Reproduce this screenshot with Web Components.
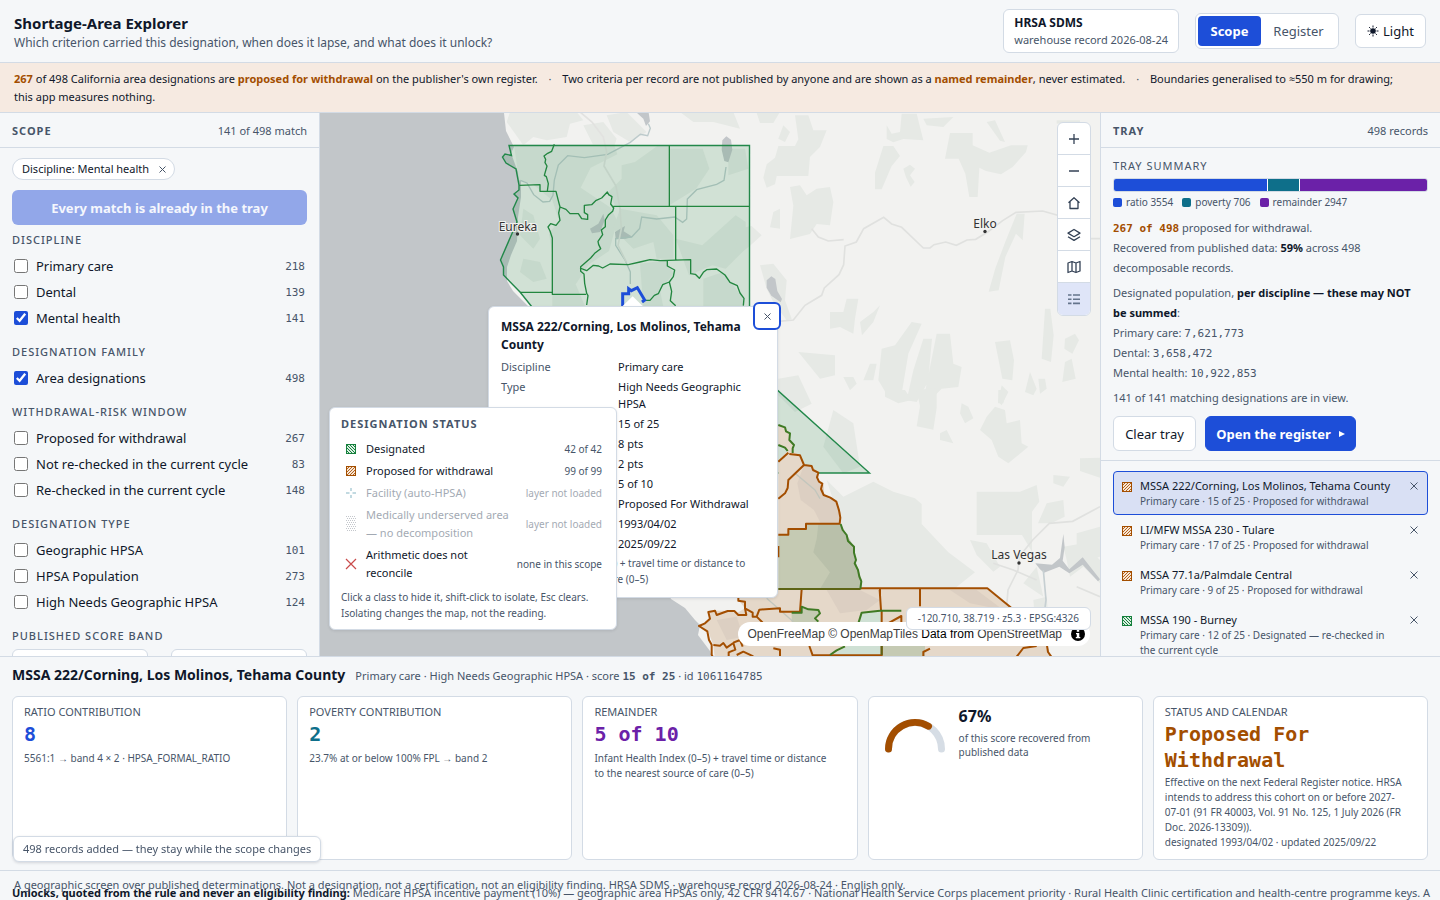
<!DOCTYPE html>
<html lang="en">
<head>
<meta charset="utf-8">
<title>Shortage-Area Explorer</title>
<style>
:root{
  --ink:#0f172a; --muted:#475569; --line:#d3dbe5; --panel:#f5f7f9; --card:#fff;
  --blue:#1d4ed8; --teal:#0e6f8a; --purple:#6b21a8; --rust:#a34e00; --green:#15803d;
  --mono:"DejaVu Sans Mono","Liberation Mono",monospace;
}
html,body{margin:0;height:100%}
body{font:12px/18px "Noto Sans","Open Sans",sans-serif;color:var(--ink);background:var(--panel);overflow:hidden}
</style>
</head>
<body>
<shortage-app></shortage-app>
<script>
const RESET = `*{box-sizing:border-box}button,input{font:inherit;color:inherit;margin:0}button{cursor:pointer}p,h1,h2,h3,dl,dd,ul{margin:0;padding:0}
.num{font-family:var(--mono);font-size:11px;line-height:1}`;
function define(name, css, html, ready) {
  const t = document.createElement('template');
  t.innerHTML = `<style>${RESET}${css}</style>${html}`;
  customElements.define(name, class extends HTMLElement {
    static observedAttributes = ['kind'];
    constructor() {
      super();
      this.attachShadow({mode: 'open'}).append(t.content.cloneNode(true));
    }
    connectedCallback() { if (ready) ready(this, this.shadowRoot); }
    attributeChangedCallback() { if (ready && this.isConnected) ready(this, this.shadowRoot); }
  });
}

define('app-header', `
:host{display:flex;align-items:center;gap:16px;height:63px;padding:0 14px;border-bottom:1px solid var(--line)}
.brand{flex:1;padding-top:3px}
h1{font-size:15px;line-height:20px;font-weight:700}
.brand p{font-size:12px;line-height:20px;color:var(--muted)}
.source{border:1px solid var(--line);border-radius:6px;background:var(--card);padding:4px 10px;height:44px}
.source b{display:block;font-size:12px;line-height:18px}
.source span{display:block;font-size:11px;line-height:16px;color:var(--muted)}
.seg{display:flex;border:1px solid var(--line);border-radius:6px;background:var(--card);padding:2px;height:36px}
.seg button{border:0;background:none;border-radius:4px;padding:0 12px;font-size:13px;color:var(--muted);min-width:63px}
.seg .on{background:var(--blue);color:#fff;font-weight:700}
.seg button+button{min-width:75px}
.theme{display:flex;align-items:center;justify-content:center;gap:4px;border:1px solid var(--line);border-radius:6px;background:var(--card);height:34px;width:71px;padding:0;font-size:13px}
`, `
<div class="brand"><h1>Shortage-Area Explorer</h1><p>Which criterion carried this designation, when does it lapse, and what does it unlock?</p></div>
<div class="source"><b>HRSA SDMS</b><span>warehouse record 2026-08-24</span></div>
<div class="seg"><button class="on">Scope</button><button>Register</button></div>
<button class="theme"><svg width="12" height="12" viewBox="0 0 12 12" stroke="#0f172a" stroke-width="1"><circle cx="6" cy="6" r="2.8" fill="#0f172a" stroke="none"/><path d="M6 .5v2M6 9.500v2M.5 6h2M9.500 6h2M2.100 2.100l1.400 1.400M8.500 8.500l1.400 1.400M9.900 2.100L8.500 3.500M3.500 8.500L2.100 9.900"/></svg>Light</button>`);

define('notice-banner', `
:host{display:block;background:#f6eae1;border-bottom:1px solid var(--line);padding:7px 14px 6px;font-size:11px;line-height:18px}
b{color:var(--rust)} i{font-style:normal;color:var(--muted);margin:0 8px}
`, `<b>267</b> of 498 California area designations are <b>proposed for withdrawal</b> on the publisher's own register. <i>·</i> Two criteria per record are not published by anyone and are shown as a <b>named remainder</b>, never estimated. <i>·</i> Boundaries generalised to ≈550 m for drawing;<br>this app measures nothing.`);

define('panel-head', `
:host{display:flex;justify-content:space-between;align-items:center;flex:none;height:35px;padding:1px 12px 0;border-bottom:1px solid var(--line)}
h2{font-size:11px;line-height:16px;font-weight:700;letter-spacing:1px;color:var(--muted)}
span{font-size:11px;color:var(--muted)}
`, `<h2></h2><span><slot></slot></span>`, (el, r) => r.querySelector('h2').textContent = el.getAttribute('heading'));

define('facet-row', `
:host{display:flex;align-items:center;height:26px;padding:0 2px}
label{display:flex;align-items:center;gap:8px;flex:1;font-size:13px}
input{width:14px;height:14px;accent-color:var(--blue)}
.num{color:var(--muted)}
`, `<label><input type="checkbox"><slot></slot></label><span class="num"></span>`, (el, r) => {
  r.querySelector('.num').textContent = el.getAttribute('count');
  r.querySelector('input').checked = el.hasAttribute('checked');
});

define('facet-group', `
:host{display:block;margin-bottom:13px}
h3{font-size:11px;line-height:18px;font-weight:500;letter-spacing:1px;color:var(--muted);margin-bottom:4px}
`, `<h3></h3><slot></slot>`, (el, r) => r.querySelector('h3').textContent = el.getAttribute('heading'));

define('scope-panel', `
:host{display:flex;flex-direction:column;border-right:1px solid var(--line);overflow:hidden;min-height:0}
.body{padding:10px 12px 0}
.chip{display:inline-flex;align-items:center;gap:10px;height:22px;border:1px solid var(--line);border-radius:11px;background:var(--card);padding:0 8px 0 9px;font-size:11px}
.chip svg{display:block}
.add{display:block;width:100%;height:35px;margin:10px 0 6px;border:0;border-radius:6px;background:#92a7e9;color:#f5f7fd;font-size:13px;font-weight:700}
.band{display:grid;grid-template-columns:136px 136px;justify-content:space-between}
.band input{width:100%;height:32px;border:1px solid var(--line);border-radius:6px;background:var(--card)}
facet-group{margin-bottom:12px}
`, `
<panel-head heading="SCOPE">141 of 498 match</panel-head>
<div class="body">
<button class="chip">Discipline: Mental health <svg width="7" height="7" viewBox="0 0 7 7" stroke="#475569"><path d="M.5.5l6 6M6.500.5l-6 6"/></svg></button>
<button class="add" disabled>Every match is already in the tray</button>
<facet-group heading="DISCIPLINE"><facet-row count="218">Primary care</facet-row><facet-row count="139">Dental</facet-row><facet-row count="141" checked>Mental health</facet-row></facet-group>
<facet-group heading="DESIGNATION FAMILY"><facet-row count="498" checked>Area designations</facet-row></facet-group>
<facet-group heading="WITHDRAWAL-RISK WINDOW"><facet-row count="267">Proposed for withdrawal</facet-row><facet-row count="83">Not re-checked in the current cycle</facet-row><facet-row count="148">Re-checked in the current cycle</facet-row></facet-group>
<facet-group heading="DESIGNATION TYPE"><facet-row count="101">Geographic HPSA</facet-row><facet-row count="273">HPSA Population</facet-row><facet-row count="124">High Needs Geographic HPSA</facet-row></facet-group>
<facet-group heading="PUBLISHED SCORE BAND"><div class="band"><input type="number" aria-label="Lowest score"><input type="number" aria-label="Highest score"></div></facet-group>
</div>`);

const SWATCH = {
  designated: '<rect x=".5" y=".5" width="9" height="9" fill="#dcefe2" stroke="#15803d"/><path d="M1 1l8 8M1 4l5 5M4 1l5 5M1 7l2 2M7 1l2 2" stroke="#15803d"/>',
  proposed: '<rect x=".5" y=".5" width="9" height="9" fill="#f7e6d6" stroke="#a34e00"/><path d="M9 1L1 9M6 1L1 6M9 4L4 9M3 1L1 3M9 7L7 9" stroke="#b4631c"/>',
  facility: '<path d="M5 0v3M5 7v3M0 5h3.500M6.500 5H10" stroke="#0e6f8a"/>',
  mua: '<path d="M0 -2.500h10M0 1.500h10M0 5.500h10M0 9.500h10" stroke="#8a919b" stroke-dasharray="1 1"/><path d="M1 -.5h9M1 3.500h9M1 7.500h9M1 11.500h9" stroke="#8a919b" stroke-dasharray="1 1"/>',
  error: '<path d="M0 0l10 10M10 0L0 10" stroke="#c94b4b" stroke-width="1.200"/>'
};
define('status-swatch', `:host{display:block;width:10px;height:10px;flex:none}svg{display:block;overflow:visible}`,
  `<svg width="10" height="10" viewBox="0 0 10 10"></svg>`, (el, r) => r.querySelector('svg').innerHTML = SWATCH[el.getAttribute('kind')] || '');

define('legend-row', `
:host{display:block}
button{display:flex;align-items:center;gap:4px;width:100%;border:0;background:none;text-align:left;padding:2px 3px 2px 5px;font-size:11px;line-height:18px}
:host([off]) button{opacity:.5;color:#475569}
status-swatch{margin-right:6px}
.name{flex:1;white-space:nowrap} .count{font-size:10px;color:var(--muted);white-space:nowrap}
`, `<button><status-swatch></status-swatch><span class="name"><slot></slot></span><span class="count"></span></button>`, (el, r) => {
  r.querySelector('.count').textContent = el.getAttribute('count');
  r.querySelector('status-swatch').setAttribute('kind', el.getAttribute('kind'));
});

define('map-legend', `
:host{display:block;border:1px solid var(--line);border-radius:6px;background:var(--card);padding:7px 11px 8px;box-shadow:0 1px 3px #0f172a1a}
h2{font-size:11px;line-height:18px;font-weight:700;letter-spacing:1px;color:var(--muted);margin-bottom:5px}
p{font-size:10px;line-height:16px;color:var(--muted);margin-top:5px}
`, `<h2>DESIGNATION STATUS</h2>
<legend-row kind="designated" count="42 of 42">Designated</legend-row>
<legend-row kind="proposed" count="99 of 99">Proposed for withdrawal</legend-row>
<legend-row kind="facility" count="layer not loaded" off>Facility (auto-HPSA)</legend-row>
<legend-row kind="mua" count="layer not loaded" off>Medically underserved area<br>— no decomposition</legend-row>
<legend-row kind="error" count="none in this scope">Arithmetic does not<br>reconcile</legend-row>
<p>Click a class to hide it, shift-click to isolate, Esc clears.<br>Isolating changes the map, not the reading.</p>`);

define('map-popup', `
:host{display:block;background:var(--card);border:1px solid var(--line);border-radius:6px;padding:11px 12px;box-shadow:0 1px 3px #0f172a1a}
h2{font-size:12px;line-height:18px;font-weight:700;margin-bottom:4px}
dl{display:grid;grid-template-columns:112px 1fr;gap:3px 5px;font-size:11px;line-height:17px}
dt{color:var(--muted)}
p{font-size:10px;line-height:16px;color:var(--muted);margin-top:3px}
.close{position:absolute;right:-4px;top:-5px;width:28px;height:28px;border:2px solid var(--blue);border-radius:6px;background:var(--card);padding:0;display:grid;place-items:center}
`, `<h2>MSSA 222/Corning, Los Molinos, Tehama<br>County</h2>
<dl><dt>Discipline</dt><dd>Primary care</dd><dt>Type</dt><dd>High Needs Geographic<br>HPSA</dd><dt>Score</dt><dd>15 of 25</dd><dt>Ratio</dt><dd>8 pts</dd><dt>Poverty</dt><dd>2 pts</dd><dt>Remainder</dt><dd>5 of 10</dd><dt>Status</dt><dd>Proposed For Withdrawal</dd><dt>Designated</dt><dd>1993/04/02</dd><dt>Updated</dt><dd>2025/09/22</dd></dl>
<p>Infant Health Index (0–5) + travel time or distance to<br>the nearest source of care (0–5)</p>
<button class="close" aria-label="Close"><svg width="7" height="7" viewBox="0 0 7 7" stroke="#475569"><path d="M.5.5l6 6M6.500.5l-6 6"/></svg></button>`);

define('map-tools', `
:host{display:block;width:34px;border:1px solid var(--line);border-radius:6px;background:var(--card);overflow:hidden}
button{display:grid;place-items:center;width:32px;height:32px;border:0;border-bottom:1px solid var(--line);background:none;padding:0}
button:last-child{border:0;background:#dfe5f8}
svg{display:block;fill:none;stroke:#334155;stroke-width:1.300}
`, `
<button aria-label="Zoom in"><svg width="14" height="14"><path d="M7 2v10M2 7h10"/></svg></button>
<button aria-label="Zoom out"><svg width="14" height="14"><path d="M2 7h10"/></svg></button>
<button aria-label="Home"><svg width="14" height="14" stroke-linejoin="round"><path d="M1.500 6.800L7 1.800l5.500 5M3 5.800v6.700h8V5.800"/></svg></button>
<button aria-label="Layers"><svg width="14" height="14" stroke-linejoin="round"><path d="M7 1.500l6 3.600-6 3.600-6-3.600zM1 8.800l6 3.600 6-3.600"/></svg></button>
<button aria-label="Base map"><svg width="14" height="14" stroke-linejoin="round"><path d="M1 3l4-1.500 4 1.500 4-1.500v9.500L9 12.500 5 11l-4 1.500zM5 1.500V11M9 3v9.500"/></svg></button>
<button aria-label="Legend"><svg width="14" height="14" style="stroke:#64748b;stroke-width:1.600"><path d="M1 3h3.500M6 3h7M1 7.200h3.500M6 7.200h7M1 11.400h3.500M6 11.400h7"/></svg></button>`);

define('map-view', `
:host{display:block;position:relative;overflow:hidden;min-height:0;background:#c2c6c9}
.map{position:absolute;inset:0;width:100%;height:100%}
.lbl{font:12px "Noto Sans",sans-serif;fill:#333;stroke:#f2f2f0;stroke-width:2;paint-order:stroke;text-anchor:middle}
map-popup{position:absolute;left:168px;top:193px;width:290px;height:292px}
map-legend{position:absolute;left:9px;bottom:26px;width:288px}
map-tools{position:absolute;right:9px;top:9px}
.coord{position:absolute;right:9px;bottom:26px;height:23px;padding:0 11px;border:1px solid var(--line);border-radius:6px;background:var(--card);font-size:10px;line-height:21px;color:var(--muted);white-space:nowrap}
.attr{position:absolute;right:10px;bottom:10px;height:24px;border-radius:12px;background:#fff;padding:0 28px 0 9px;font:12px/24px "Liberation Sans",sans-serif;color:#000;white-space:nowrap}
.attr a{color:#404040;text-decoration:none}
.attr svg{position:absolute;right:5px;top:5px}
`, `
<svg class="map" viewBox="320 113 780 543" preserveAspectRatio="xMidYMid slice" aria-hidden="true">
<path fill="#f2f2f0" d="M504 113l2 18 8 16-3 6 5 14 5 10v20l-3 20-1 24-6 14-4 12v14l6 10 14 14 14 14 30 30 100 250 14 9 10 12 5 5-2 10 12 16 4 14H1100V113z"/>
<g transform="translate(320 112) scale(.333333)">
 <g fill="#e6e9e5">
  <path d="M570 0h200l20 25-40 10-10 40-60 10-40-10-30 25-50-70zM790 40l60-10 40 50-10 30-60-10zM860 10l60-10 60 60-50 30-50-30zM1080 0h160l20 50-80-20-60 0z"/>
  <path d="M582 97h300l10 30-80 40-30 60 90 60 20 40-25 90-60 40-40 60 30 70-100-2v-160l-10-60 30-40-20-60-60-50-40-10z"/>
  <path d="M905 160l40-10 70-50h30v180h-160l-20-40 40-40zM1048 110l100 0 20 60-40 60-80 50zM900 290l110 20 50 60v70l-50 0-10-50-60 20-60-60zM1067 380l80 20 100-90 30 20v80l-60 60-40-10-70 30zM960 455l80-10 20 40-40 50 10 50h-60zM1150 500l60-20 60 80v30h-120zM610 290l30 20 20 70-20 30-40-40zM610 440l50 10 20 50-40 10-40-30z"/>
  <path d="M1225 110h50l10 60-60 20z"/>
 </g>
 <path fill="#c2c6c9" d="M950 2h36l4 26-12 14-8-22zM1207 85l12-12 14 10 4 30-12 38-12-4-8-34zM810 350l25-15 15-30 4 20-14 35-24 4zM885 360l30-18-4 16 26 16-20 6-30 2z"/>
 <g fill="none" stroke="#bccacb" stroke-width="4"><path d="M985 35l6 14-8 22-22-4-30 24-68 36-70 10-50-6-28 28-12 45-4 46-10 18-20 2-28-22-20-35-20-8M1218 165l-6 40-22 12-60 16-28 28-2 60-12 10-24-16-54 6-45-6-6 34-24 26-48 5 0 20 28 44 16 36 0 36"/></g>
 <path fill="none" stroke="#e2e2e0" stroke-width="5" d="M780 0l36 30 34 45 10 45-8 42 36 60 12 68 4 60-10 50 26 52"/>
</g>
<g transform="translate(740 112) scale(.333333)">
 <g fill="#e6e9e5">
  <path d="M50 3h68l-18 30-40 0zM165 10h40l15 45 40 0-20 50-30 30-5 57h-95l-5 25-25 10-10-30 10-40 25-20 10-35h50l10-20zM130 40l20 20-15 30-20-10zM430 102l30 0 20 30-25 30-30 70-20 0 0-50zM440 40l15 25 25-5 5-55h45l20 80-60-4-30 10-20-10zM550 20l90-5-30 30-50-5zM630 63h68v37l50 22 65-22h50l-5 20-40 45-35 22-45-10-20-10-5 88-25 0-12-70-20-45h-41zM740 30l25-5 30 65-15-4zM490 170l20-12 15 12-15 20 14 20-12 14-14-28zM150 225l30-5 20 30 30-20 40-5 10 45-10 70-40-4-20 30-60 15 10-100zM60 460l40-5 40 50-5 60 20 55-15 5-40-55-20-40zM-5 350l40-8 30 28-40 36-40 28zM100 300l20-10 0 60-30-4zM830 305l24 0-6 80-20-20-32 70-20 100-30 4 20-70 30-80zM270 600l40 0 10-40 35 0-10 60-5 45-40-20-30 5zM360 630l40-30 20-20-20 50-34 40zM175 720l110 10v60l-45 10zM425 710l40-10 50-70 30 5-40 90-20 120-40 10-30-50zM500 865l20-90 30-95 26 0-12 130-34 60zM590 665l40 0 10 90 25 10-10 60-50 5-60 60zM765 690l45-5 12 60-5 60-30-5zM915 590l16 0 10 80-8 80-28-10zM975 680l30-15 12 20-20 40-24-15zM975 750l20-10 12 60-40 10zM310 795l30 0 10 20-20 20zM390 755l20 0-10 50-30 0zM870 780l20 50-10 20-25-10zM895 800l20 0 5 30-20 15zM785 820l20 20-20 40-10-10zM115 800l60-10 40 85-50 25-50-50z"/>
  <path d="M950 25h70v10H950z"/>
 </g>
 <path fill="#c2c6c9" d="M80 505l14-12 12 8 6 36 14 24-4 10-28-20-14-24z"/>
 <g fill="none" stroke="#e0e1df" stroke-width="5"><path d="M115 628l45-4 35-44 50-30 8-22 44-40 14-30 4-56 34-12 22-40 60-34 24 20 30 10 65 62h20l12-10 35-8 32 10 32-16 26-2 36-22 45-34 40-25 80-4 50 14 30 30M215 350l20 25 30 12 46-4M1050 380h35"/></g>
</g>
<g transform="translate(860 390) scale(.333333)">
 <g fill="#e6e9e5">
  <path d="M75 0h60l20 30-40 10-40-20zM170 0l60-6 0 60-10 65-50-10 10-60zM415 0l25 0-10 40-16 0zM305 40l20 10 15 35-25 15-15-30zM240 130l20-10 20 40-40-10zM405 50l30 10 5 40 40-10 5 70 20 10-60 50-30-20-20-50-35-30 20-40zM-100 270l50 50 90-45 60 30 65 20 20 17v60l80 85 80 60-60 48H0l-20-70-30-100zM350 305h130l50-20 8 50-22 30 0 120-30-50h-136zM660 205l60-2v60l-60-20zM580 255l50 5-20 30-30-10zM560 340l50-10 4 50-40 20-40 0zM330 450l50 10 40 70-20 15-50-50zM650 430l70-20v90l-70 20zM610 470l60-10 50 50v70l-50-50-40 30-10-50zM530 530l20 90-60-40zM520 630l40-10 5 60-40 10z"/>
  <path d="M-80 60l60 40 20 130-50 20-60-80z"/>
 </g>
 <path fill="#c2c6c9" d="M610 432l4 40-6 40 20 26 40-36 52 66-6 6-46-50-40 26-30-20-46 18-12-10-14-18 50 4 24-20z"/>
 <g fill="none" stroke="#e0e1df" stroke-width="5"><path d="M440 650l4-50 30-60 4-40 40-50 50-50 70-6 82-44M400 520l60 20 70 30M650 590l70 30"/></g>
 <path fill="none" stroke="#c6cfd2" stroke-width="5" d="M550 540l8 90-4 30"/>
</g>
<g fill="#15803d" fill-opacity=".15" stroke="#22884a" stroke-width="1.400">
 <path d="M509 145.500H749.500V365L869.500 473H640L532 307 520 292 503.500 275V267L500.500 260 517 222 513 209 518 198 514 194 519 190V185L516 169 506 163 502.500 157 505 154 511.500 155.500z"/>
</g>
<g transform="translate(320 112) scale(.333333)" fill="none" stroke="#22863f" stroke-width="4" stroke-linejoin="round">
 <path d="M703 97l-8 21-12 6-11 8 5 10-2 10 6 10-8 28 6 4 6 21-3 22M598 220l62-2v20h48l6 24 6 23-4 18 4 22-12 15-16-5-8 10 6 12 7 21v167M720 285l18 7 12 13 25 0 10 15 18 2v-14l-10-6v-22l22-2 12-12 18-8 17-18 4 8 10 6-4 22 9 12-3 10-12 10-10 16 0 20-12 10 4 14-14 20 2 10 6 12-18 14-12 14-30 26 0 14 10 8 2 28 6 30 4 7-4 28M880 283h408M1048 100v183M1067 283v162M780 468l20 8 20-16 16 2 12 6 22-12 55 2 35-8 30-7 30 3 92-3v42l14 2 12 12 12-18 10-8 30-2 25 18 15 22 22 10 8 22 12 16-2 22M1042 445v17l22 12-4 20-12 16 7 28-4 28 16 15M1048 510l-20 8-13 27-12 5-13 15h-15M600 541h97v6h101"/>
 <path stroke="#1d4ed8" stroke-width="9" stroke-linejoin="miter" d="M908 583v-38h18v-15l8 6 18-9 22 37-8 6"/>
 <path stroke="none" fill="#fff" d="M905 585l33-32 33 32z"/>
</g>
<g transform="translate(600 390) scale(.333333)" stroke-linejoin="round">
 <path fill="#e5d8c9" d="M535 105l20 7 15 18-2 20 14 15-2 20 20 10 12 30 23 3 20 20v27l15 10 2 30 38 20 12 35v65H535z"/>
 <path fill="#dccfc2" d="M612 225l23 3 20 20v27l15 10 2 30 38 20 12 35v30h-60l-20-40-40-30-10-50z"/>
 <path fill="#cfe0d4" d="M535 165l20 8 8 10-28 26z"/>
 <path fill="#c5cab3" d="M535 435h30v-17h53v-16h104l18 33 22 35 3 40 20 60-3 27H535z"/>
 <path fill="#b9c0aa" d="M655 402h67l18 33 22 35 3 40 20 60-3 27H660l30-50-50-60 10-40z"/>
 <path fill="#e5d8c9" d="M415 597H1160L1230 650 1345 775 1355 810H345L340 765 325 725 300 708 330 685 325 668 350 662 385 662 410 670 435 655 415 630z"/>
 <path fill="#dccfc2" d="M680 600l100 0 60 30-40 30-80 10zM1050 600l80 0 80 60-100-20zM350 690l60-10 20 60-50 10z"/>
 <path fill="#c5cab3" d="M575 668h30v-18l50 10 5 10-15 15 15 20-85 10z"/>
 <path fill="#cfe0d4" d="M785 668l58-8v140H690l80-50z"/>
 <path fill="#c5cab3" d="M845 740h130v70H845z"/>
 <path fill="none" stroke="#c2c6bd" stroke-width="4" d="M585 250l60 50 15 26M500 625l80 70"/>
 <g fill="none" stroke="#a34e00" stroke-width="6">
  <path d="M568 192l32 4 12 29 23 3 4 12 16 8-4 14 6 13 10 6-4 16 8 18 20 8 18 12 8 26 4 22-2 18H618v16h-53v17h-30M535 215l30-27M612 225l-47 45-2 24-8 16-20 16M535 468v34"/>
  <path d="M782 595h380l68 55 90 90M605 597l-5 68h-60v-10l-62 4-8 21h-12l0-12-23-13v-20l-20-3v-10M470 680l20 20M435 655l4 20-24 0-12-12-20 0-33 12-5-13-20 4 5 20-15 14-18 8 25 16 5 26 8 14 0 30 12 26M340 765l20 2 10-8 10 14 20-14 6 20-20 8 0 20M400 758l20-8 8 20M410 795l20-10 30 14M520 775l20 4v20M628 768l10 28h210M840 597v20M843 660l-4-60M845 660v135M960 597v52M864 700l40-22v24M970 800v-14l20-10M1250 800l20-26 40-6M1340 760l4 26 10 14"/>
 </g>
 <g fill="none" stroke="#3f7a24" stroke-width="6">
  <path d="M535 105l20 7 3 12 12 6-2 20 14 15-4 10 0 14M722 402l6 18 12 15 4 18 18 17 0 18 6 22-4 10 10 20 4 20 6 14-3 23M575 668h30v-18l20 8 30 2 5 10-15 15 10 10M775 700l10-32 55-6h64M690 795l20-14 25-12M535 165l20 8 8 10"/>
  <path stroke="#5d6416" d="M535 597h247M845 710v85"/>
 </g>
</g>
<circle cx="517.500" cy="234" r="1.700" fill="#333"/><circle cx="985" cy="231.500" r="1.700" fill="#333"/><circle cx="1019" cy="563" r="1.700" fill="#333"/>
<text class="lbl" x="518" y="231">Eureka</text><text class="lbl" x="985" y="228">Elko</text><text class="lbl" x="1019" y="559">Las Vegas</text>
</svg>
<map-tools></map-tools>
<div class="attr"><a href="#">OpenFreeMap</a> <a href="#">© OpenMapTiles</a> Data from <a href="#">OpenStreetMap</a><svg width="14" height="14" viewBox="0 0 14 14"><circle cx="7" cy="7" r="7"/><path fill="#fff" d="M5.800 2.500h2.400v2.200H5.800zM5 6h3.300v4H9.300v1.300H4.800V10h1V7.300H5z"/></svg></div>
<div class="coord">-120.710, 38.719 · z5.3 · EPSG:4326</div>
<map-popup></map-popup>
<map-legend></map-legend>`);

define('tray-item', `
:host{display:flex;gap:8px;min-height:45px;padding:5px 8px;border:1px solid transparent;border-radius:4px}
:host([selected]){background:#d9e0f4;border-color:var(--blue);min-height:44px}
status-swatch{margin-top:5px}
.t{flex:1;min-width:0}
h3{font-size:11px;line-height:17px;font-weight:400;white-space:nowrap}
p{font-size:10px;line-height:15px;color:var(--muted);max-width:262px}
button{border:0;background:none;padding:0;width:10px;height:10px;margin-top:4px;display:grid;place-items:center}
`, `<status-swatch></status-swatch><div class="t"><h3></h3><p><slot></slot></p></div><button aria-label="Remove"><svg width="8" height="8" viewBox="0 0 8 8" stroke="#475569"><path d="M.5.5l7 7M7.500.5l-7 7"/></svg></button>`, (el, r) => {
  r.querySelector('h3').textContent = el.getAttribute('name');
  r.querySelector('status-swatch').setAttribute('kind', el.getAttribute('kind'));
});

define('tray-panel', `
:host{display:flex;flex-direction:column;border-left:1px solid var(--line);overflow:hidden;min-height:0}
.body{padding:9px 12px;border-bottom:1px solid var(--line);color:var(--muted);font-size:11px;line-height:20px}
h3{font-size:11px;line-height:18px;font-weight:400;letter-spacing:1px;margin-bottom:3px}
.bar{display:flex;gap:1px;height:14px;border:1px solid var(--line);border-radius:3px;background:#fff;overflow:hidden}
.bar i:nth-child(1){flex:3554;background:var(--blue)}.bar i:nth-child(2){flex:706;background:var(--teal)}.bar i:nth-child(3){flex:2947;background:var(--purple)}
.key{display:flex;gap:9px;font-size:10px;line-height:18px;margin-top:1px}
.key span{display:flex;align-items:center;gap:4px}
.key i{width:9px;height:9px;border-radius:2px}
b{color:var(--ink)} b.num{color:var(--rust)}
p{margin-top:5px}
.key+p{margin-top:7px}
.acts{display:flex;gap:9px;margin-top:8px}
.acts button{height:35px;border-radius:6px;border:1px solid var(--line);background:var(--card);color:var(--ink);font-size:13px;padding:0;width:83px}
.acts .go{background:var(--blue);border-color:var(--blue);color:#fff;font-weight:700;width:151px;display:flex;align-items:center;justify-content:center;gap:8px}
.list{padding:10px 12px 0}
`, `
<panel-head heading="TRAY">498 records</panel-head>
<div class="body"><h3>TRAY SUMMARY</h3>
<div class="bar"><i></i><i></i><i></i></div>
<div class="key"><span><i style="background:var(--blue)"></i>ratio 3554</span><span><i style="background:var(--teal)"></i>poverty 706</span><span><i style="background:var(--purple)"></i>remainder 2947</span></div>
<p><b class="num">267 of 498</b> proposed for withdrawal.<br>Recovered from published data: <b>59%</b> across 498<br>decomposable records.</p>
<p>Designated population, <b>per discipline — these may NOT<br>be summed</b>:<br>Primary care: <span class="num">7,621,773</span><br>Dental: <span class="num">3,658,472</span><br>Mental health: <span class="num">10,922,853</span></p>
<p>141 of 141 matching designations are in view.</p>
<div class="acts"><button>Clear tray</button><button class="go">Open the register <svg width="6" height="6"><path fill="#fff" d="M0 0l6 3-6 3z"/></svg></button></div></div>
<div class="list">
<tray-item selected kind="proposed" name="MSSA 222/Corning, Los Molinos, Tehama County">Primary care · 15 of 25 · Proposed for withdrawal</tray-item>
<tray-item kind="proposed" name="LI/MFW MSSA 230 - Tulare">Primary care · 17 of 25 · Proposed for withdrawal</tray-item>
<tray-item kind="proposed" name="MSSA 77.1a/Palmdale Central">Primary care · 9 of 25 · Proposed for withdrawal</tray-item>
<tray-item kind="designated" name="MSSA 190 - Burney">Primary care · 12 of 25 · Designated — re-checked in the current cycle</tray-item>
</div>`);

define('metric-card', `
:host{display:block;border:1px solid var(--line);border-radius:6px;background:var(--card);padding:7px 11px;color:var(--muted);font-size:10px;line-height:15px;min-width:0}
h3{font-size:11px;line-height:16px;font-weight:400}
.v{font:700 20px/26px var(--mono);color:var(--tone);margin:1px 0 4px}
:host([compact]) .v{margin-bottom:2px}
`, `<h3></h3><div class="v"></div><slot></slot>`, (el, r) => {
  r.querySelector('h3').textContent = el.getAttribute('heading');
  r.querySelector('.v').textContent = el.getAttribute('value');
  el.style.setProperty('--tone', `var(--${el.getAttribute('tone')})`);
});

define('gauge-card', `
:host{display:flex;align-items:flex-start;gap:14px;border:1px solid var(--line);border-radius:6px;background:var(--card);padding:8px 16px;color:var(--muted);font-size:10px;line-height:14px}
svg{flex:none;margin-top:13px}
b{display:block;font-size:16px;line-height:22px;color:var(--ink);margin-bottom:4px}
`, `<svg width="60" height="36" viewBox="0 0 60 36" fill="none" stroke-width="7" stroke-linecap="round"><path stroke="#d6dde5" d="M3.500 31a26.500 26.500 0 0 1 53 0"/><path stroke="#a34e00" d="M3.500 31A26.500 26.500 0 0 1 43.500 8.200"/></svg>
<div><b>67%</b>of this score recovered from<br>published data</div>`);

define('detail-panel', `
:host{display:block;border-top:1px solid var(--line);padding:8px 12px 0;height:214px}
header{display:flex;align-items:baseline;gap:10px;height:31px;color:var(--muted)}
h2{font-size:14px;line-height:20px;color:var(--ink)}
header p{font-size:11px}
.cards{display:grid;grid-template-columns:repeat(5,minmax(0,1fr));gap:10px;height:164px}
.unlock{margin-top:24px;font-size:11px;line-height:18px;color:var(--muted);white-space:nowrap}
.unlock b{color:var(--ink)}
`, `
<header><h2>MSSA 222/Corning, Los Molinos, Tehama County</h2><p>Primary care · High Needs Geographic HPSA · score <b class="num">15 of 25</b> · id <span class="num">1061164785</span></p></header>
<div class="cards">
<metric-card heading="RATIO CONTRIBUTION" value="8" tone="blue">5561:1 → band 4 × 2 · HPSA_FORMAL_RATIO</metric-card>
<metric-card heading="POVERTY CONTRIBUTION" value="2" tone="teal">23.7% at or below 100% FPL → band 2</metric-card>
<metric-card heading="REMAINDER" value="5 of 10" tone="purple">Infant Health Index (0–5) + travel time or distance<br>to the nearest source of care (0–5)</metric-card>
<gauge-card></gauge-card>
<metric-card compact heading="STATUS AND CALENDAR" value="Proposed For Withdrawal" tone="rust">Effective on the next Federal Register notice. HRSA<br>intends to address this cohort on or before 2027-<br>07-01 (91 FR 40003, Vol. 91 No. 125, 1 July 2026 (FR<br>Doc. 2026-13309)).<br>designated 1993/04/02 · updated 2025/09/22</metric-card>
</div>
<p class="unlock"><b>Unlocks, quoted from the rule and never an eligibility finding:</b> Medicare HPSA incentive payment (10%) — geographic area HPSAs only, 42 CFR §414.67 · National Health Service Corps placement priority · Rural Health Clinic certification and health-centre programme keys. A</p>`);

define('app-footer', `
:host{display:block;border-top:1px solid var(--line);height:30px;padding:5px 14px;font-size:11px;line-height:18px;color:var(--muted);white-space:nowrap}
`, `A geographic screen over published determinations. Not a designation, not a certification, not an eligibility finding. HRSA SDMS · warehouse record 2026-08-24 · English only.`);

define('toast-note', `
:host{position:fixed;left:13px;bottom:38px;height:26px;padding:0 9px;border:1px solid var(--line);border-radius:6px;background:var(--card);box-shadow:0 1px 3px #0f172a26;font-size:11px;line-height:23px;color:var(--muted);white-space:nowrap}
`, `<slot></slot>`);

define('shortage-app', `
:host{display:grid;grid-template-columns:minmax(0,1fr);grid-template-rows:auto auto minmax(0,1fr) auto auto;height:100vh}
main{display:grid;grid-template-columns:320px minmax(0,1fr) 340px;min-height:0}
`, `<app-header></app-header><notice-banner></notice-banner>
<main><scope-panel></scope-panel><map-view></map-view><tray-panel></tray-panel></main>
<detail-panel></detail-panel><app-footer></app-footer>
<toast-note>498 records added — they stay while the scope changes</toast-note>`);
</script>
</body>
</html>
